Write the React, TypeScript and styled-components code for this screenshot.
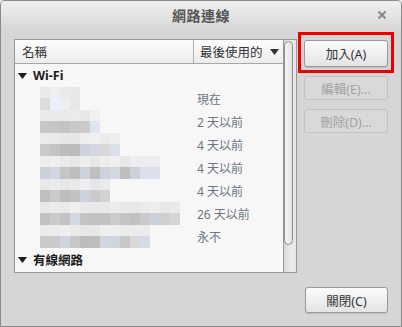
import React from "react";
import styled, { createGlobalStyle } from "styled-components";

const GlobalStyle = createGlobalStyle`
  html, body {
    margin: 0;
    padding: 0;
    background: #e4e4e4;
  }
  body {
    font-family: "Noto Sans", "Noto Sans CJK TC", sans-serif;
    font-size: 12px;
    color: #333;
  }
  * {
    box-sizing: border-box;
  }
`;

const Window = styled.div`
  width: 402px;
  height: 327px;
  border: 1px solid #8a8a8a;
  border-radius: 5px 5px 0 0;
  background: #d6d6d6;
  display: flex;
  flex-direction: column;
  overflow: hidden;
`;

const TitleBar = styled.div`
  height: 30px;
  flex: none;
  padding: 0 13px 3px 13px;
  display: grid;
  grid-template-columns: 1fr auto 1fr;
  align-items: center;
  background: linear-gradient(#f0f0f0, #dadada 85%, #d6d6d6);
`;

const Title = styled.div`
  grid-column: 2;
  font-weight: bold;
  font-size: 14px;
  color: #555;
  letter-spacing: 0.5px;
`;

const CloseButton = styled.div`
  grid-column: 3;
  justify-self: end;
  width: 10px;
  height: 10px;
  display: flex;
  margin-right: 1px;
`;

const Body = styled.div`
  flex: 1;
  display: flex;
  flex-direction: column;
  padding: 8px 13px 13px 13px;
`;

const Main = styled.div`
  display: flex;
  gap: 7px;
  height: 234px;
`;

const ListBox = styled.div`
  width: 283px;
  border: 1px solid #999;
  background: #f7f7f7;
  display: flex;
`;

const TreeArea = styled.div`
  flex: 1;
  display: flex;
  flex-direction: column;
`;

const HeaderRow = styled.div`
  height: 24px;
  flex: none;
  display: flex;
  border-bottom: 1px solid #a6a6a6;
  background: linear-gradient(#fdfdfd, #ececec);
`;

const HeaderCell = styled.div<{ $w?: number; $pad: number }>`
  ${(p) => (p.$w ? `width: ${p.$w}px; border-right: 1px solid #b0b0b0;` : "flex: 1;")}
  display: flex;
  align-items: center;
  gap: 7px;
  white-space: nowrap;
  padding-left: ${(p) => p.$pad}px;
  color: #333;
  font-size: 12.5px;
`;

const Row = styled.div`
  height: 23px;
  flex: none;
  display: flex;
  align-items: center;
`;

const SectionLabel = styled.div`
  display: flex;
  align-items: center;
  gap: 6px;
  padding-left: 3px;
  font-weight: bold;
  font-size: 12.5px;
  color: #1c1c1c;
`;

const NameCell = styled.div`
  width: 179px;
  height: 100%;
  padding-left: 25px;
  display: flex;
  align-items: center;
`;

const Mosaic = styled.div<{ $cols: number }>`
  display: grid;
  grid-template-columns: repeat(${(p) => p.$cols}, 10px);
  grid-template-rows: 11px 12px;
`;

const TimeCell = styled.div`
  padding-left: 3px;
  color: #6e7681;
  white-space: nowrap;
`;

const Scrollbar = styled.div`
  width: 13px;
  border-left: 1px solid #9a9a9a;
  background: linear-gradient(90deg, #d9d9d9, #ececec 60%, #e4e4e4);
  padding-top: 1px;
`;

const Thumb = styled.div`
  width: 9px;
  height: 204px;
  border: 1px solid #8c8c8c;
  border-radius: 5px;
  background: linear-gradient(90deg, #f6f6f6, #e2e2e2);
`;

const ButtonColumn = styled.div`
  width: 84px;
  display: flex;
  flex-direction: column;
  gap: 9px;
  padding-top: 1px;
`;

const Highlight = styled.div`
  position: relative;
  &::after {
    content: "";
    position: absolute;
    left: -6px;
    right: -6px;
    top: -8px;
    bottom: -6px;
    border: 3px solid #ee0000;
    pointer-events: none;
  }
`;

const Button = styled.div<{ $disabled?: boolean; $h?: number }>`
  height: ${(p) => p.$h ?? 26}px;
  border-radius: 3px;
  display: flex;
  align-items: center;
  justify-content: center;
  font-size: 12.5px;
  ${(p) =>
    p.$disabled
      ? `
    border: 1px solid #c2c2c2;
    background: #d9d9d9;
    color: #a2a2a2;
  `
      : `
    border: 1px solid #9a9a9a;
    background: linear-gradient(#fbfbfb, #e4e4e4);
    color: #333;
    box-shadow: 0 1px 1px rgba(0, 0, 0, 0.12);
  `}
`;

const Footer = styled.div`
  display: flex;
  justify-content: flex-end;
  margin-top: 14px;
`;

const FooterButton = styled(Button)`
  width: 83px;
`;

const Triangle = () => (
  <svg width="9" height="6" viewBox="0 0 9 6">
    <path d="M0 0 H9 L4.5 6 Z" fill="currentColor" />
  </svg>
);

// pseudo random grays for the blurred names
const shade = (r: number, c: number, top: boolean, cols: number) => {
  const n = Math.abs(Math.sin((r + 1) * 12.9898 + (c + 1) * 78.233) * 43758.5453) % 1;
  const fade = c >= cols - 2 ? 14 : 0;
  if (top) {
    const v = Math.round(230 + n * 10);
    return `rgb(${v},${v},${v + 1})`;
  }
  const base = r === 0 ? 212 : 186;
  const v = Math.min(240, Math.round(base + n * 30 + fade));
  const tint = n > 0.6 ? 5 : 0;
  return `rgb(${v - tint},${v},${v + tint * 2})`;
};

const entries = [
  { cols: 4, time: "現在" },
  { cols: 6, time: "2 天以前" },
  { cols: 8, time: "4 天以前" },
  { cols: 12, time: "4 天以前" },
  { cols: 7, time: "4 天以前" },
  { cols: 14, time: "26 天以前" },
  { cols: 11, time: "永不" },
];

const App: React.FC = () => {
  return (
    <>
      <GlobalStyle />
      <Window>
        <TitleBar>
          <Title>網路連線</Title>
          <CloseButton>
            <svg width="10" height="10" viewBox="0 0 10 10">
              <path d="M1.5 1.5 L8.5 8.5 M8.5 1.5 L1.5 8.5" stroke="#8a8a8a" strokeWidth="2.2" />
            </svg>
          </CloseButton>
        </TitleBar>
        <Body>
          <Main>
            <ListBox>
              <TreeArea>
                <HeaderRow>
                  <HeaderCell $w={179} $pad={7}>名稱</HeaderCell>
                  <HeaderCell $pad={6}>
                    最後使用的
                    <Triangle />
                  </HeaderCell>
                </HeaderRow>
                <Row>
                  <SectionLabel>
                    <Triangle />
                    Wi-Fi
                  </SectionLabel>
                </Row>
                {entries.map((e, r) => (
                  <Row key={r}>
                    <NameCell>
                      <Mosaic $cols={e.cols}>
                        {Array.from({ length: e.cols * 2 }, (_, i) => {
                          const top = i < e.cols;
                          const c = i % e.cols;
                          return (
                            <div key={i} style={{ background: shade(r, c, top, e.cols) }} />
                          );
                        })}
                      </Mosaic>
                    </NameCell>
                    <TimeCell>{e.time}</TimeCell>
                  </Row>
                ))}
                <Row>
                  <SectionLabel>
                    <Triangle />
                    有線網路
                  </SectionLabel>
                </Row>
              </TreeArea>
              <Scrollbar>
                <Thumb />
              </Scrollbar>
            </ListBox>
            <ButtonColumn>
              <Highlight>
                <Button $h={27}>加入(A)</Button>
              </Highlight>
              <Button $disabled $h={24}>編輯(E)...</Button>
              <Button $disabled $h={24}>刪除(D)...</Button>
            </ButtonColumn>
          </Main>
          <Footer>
            <FooterButton>關閉(C)</FooterButton>
          </Footer>
        </Body>
      </Window>
    </>
  );
};

export default App;
